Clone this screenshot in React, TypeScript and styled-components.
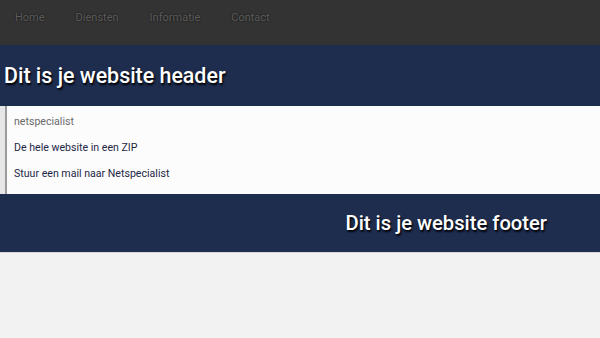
import React from "react";
import styled, { createGlobalStyle } from "styled-components";

const Global = createGlobalStyle`
  html, body { margin: 0; padding: 0; background: #f2f2f2; }
  body { font-family: Roboto, "Liberation Sans", sans-serif; }
`;

const Nav = styled.nav`
  height: 45px;
  background: #333333;
  display: flex;
  align-items: flex-start;
  padding: 11px 0 0 15px;
  box-sizing: border-box;
`;

const NavItem = styled.a`
  font-size: 11px;
  color: #5c5c5c;
  text-decoration: none;
  text-shadow: 0 0 2px #111;
  margin-right: 31px;
  line-height: 14px;
`;

const Header = styled.header`
  height: 61px;
  background: #1e2c4e;
  display: flex;
  align-items: center;
  padding: 0 4px;
  box-sizing: border-box;
`;

const Title = styled.h1`
  margin: 0;
  font-size: 21.4px;
  font-weight: 500;
  color: #ffffff;
  text-shadow: 1px 2px 2px #000;
  line-height: 26px;
`;

const Content = styled.main`
  display: flex;
  height: 88px;
  background: #e6e6e6;
`;

const Panel = styled.div`
  margin-left: 5px;
  flex: 1;
  background: #fcfcfc;
  border-left: 2px solid #9a9a9a;
  padding: 9px 0 0 7px;
  display: flex;
  flex-direction: column;
  gap: 12px;
`;

const Line = styled.div<{ $muted?: boolean }>`
  font-size: 10.6px;
  font-weight: 400;
  line-height: 14px;
  color: ${(p) => (p.$muted ? "#6a6a6a" : "#1e2646")};
`;

const Footer = styled.footer`
  height: 58px;
  background: #1e2c4e;
  display: flex;
  align-items: center;
  justify-content: flex-end;
  padding-right: 53px;
  border-bottom: 1px solid #d8d8d8;
`;

const FooterTitle = styled.div`
  font-size: 20.2px;
  font-weight: 500;
  color: #ffffff;
  text-shadow: 1px 2px 2px #000;
`;

export default function App() {
  return (
    <>
      <Global />
      <Nav>
        <NavItem href="#">Home</NavItem>
        <NavItem href="#">Diensten</NavItem>
        <NavItem href="#">Informatie</NavItem>
        <NavItem href="#">Contact</NavItem>
      </Nav>
      <Header>
        <Title>Dit is je website header</Title>
      </Header>
      <Content>
        <Panel>
          <Line $muted>netspecialist</Line>
          <Line>De hele website in een ZIP</Line>
          <Line>Stuur een mail naar Netspecialist</Line>
        </Panel>
      </Content>
      <Footer>
        <FooterTitle>Dit is je website footer</FooterTitle>
      </Footer>
    </>
  );
}
